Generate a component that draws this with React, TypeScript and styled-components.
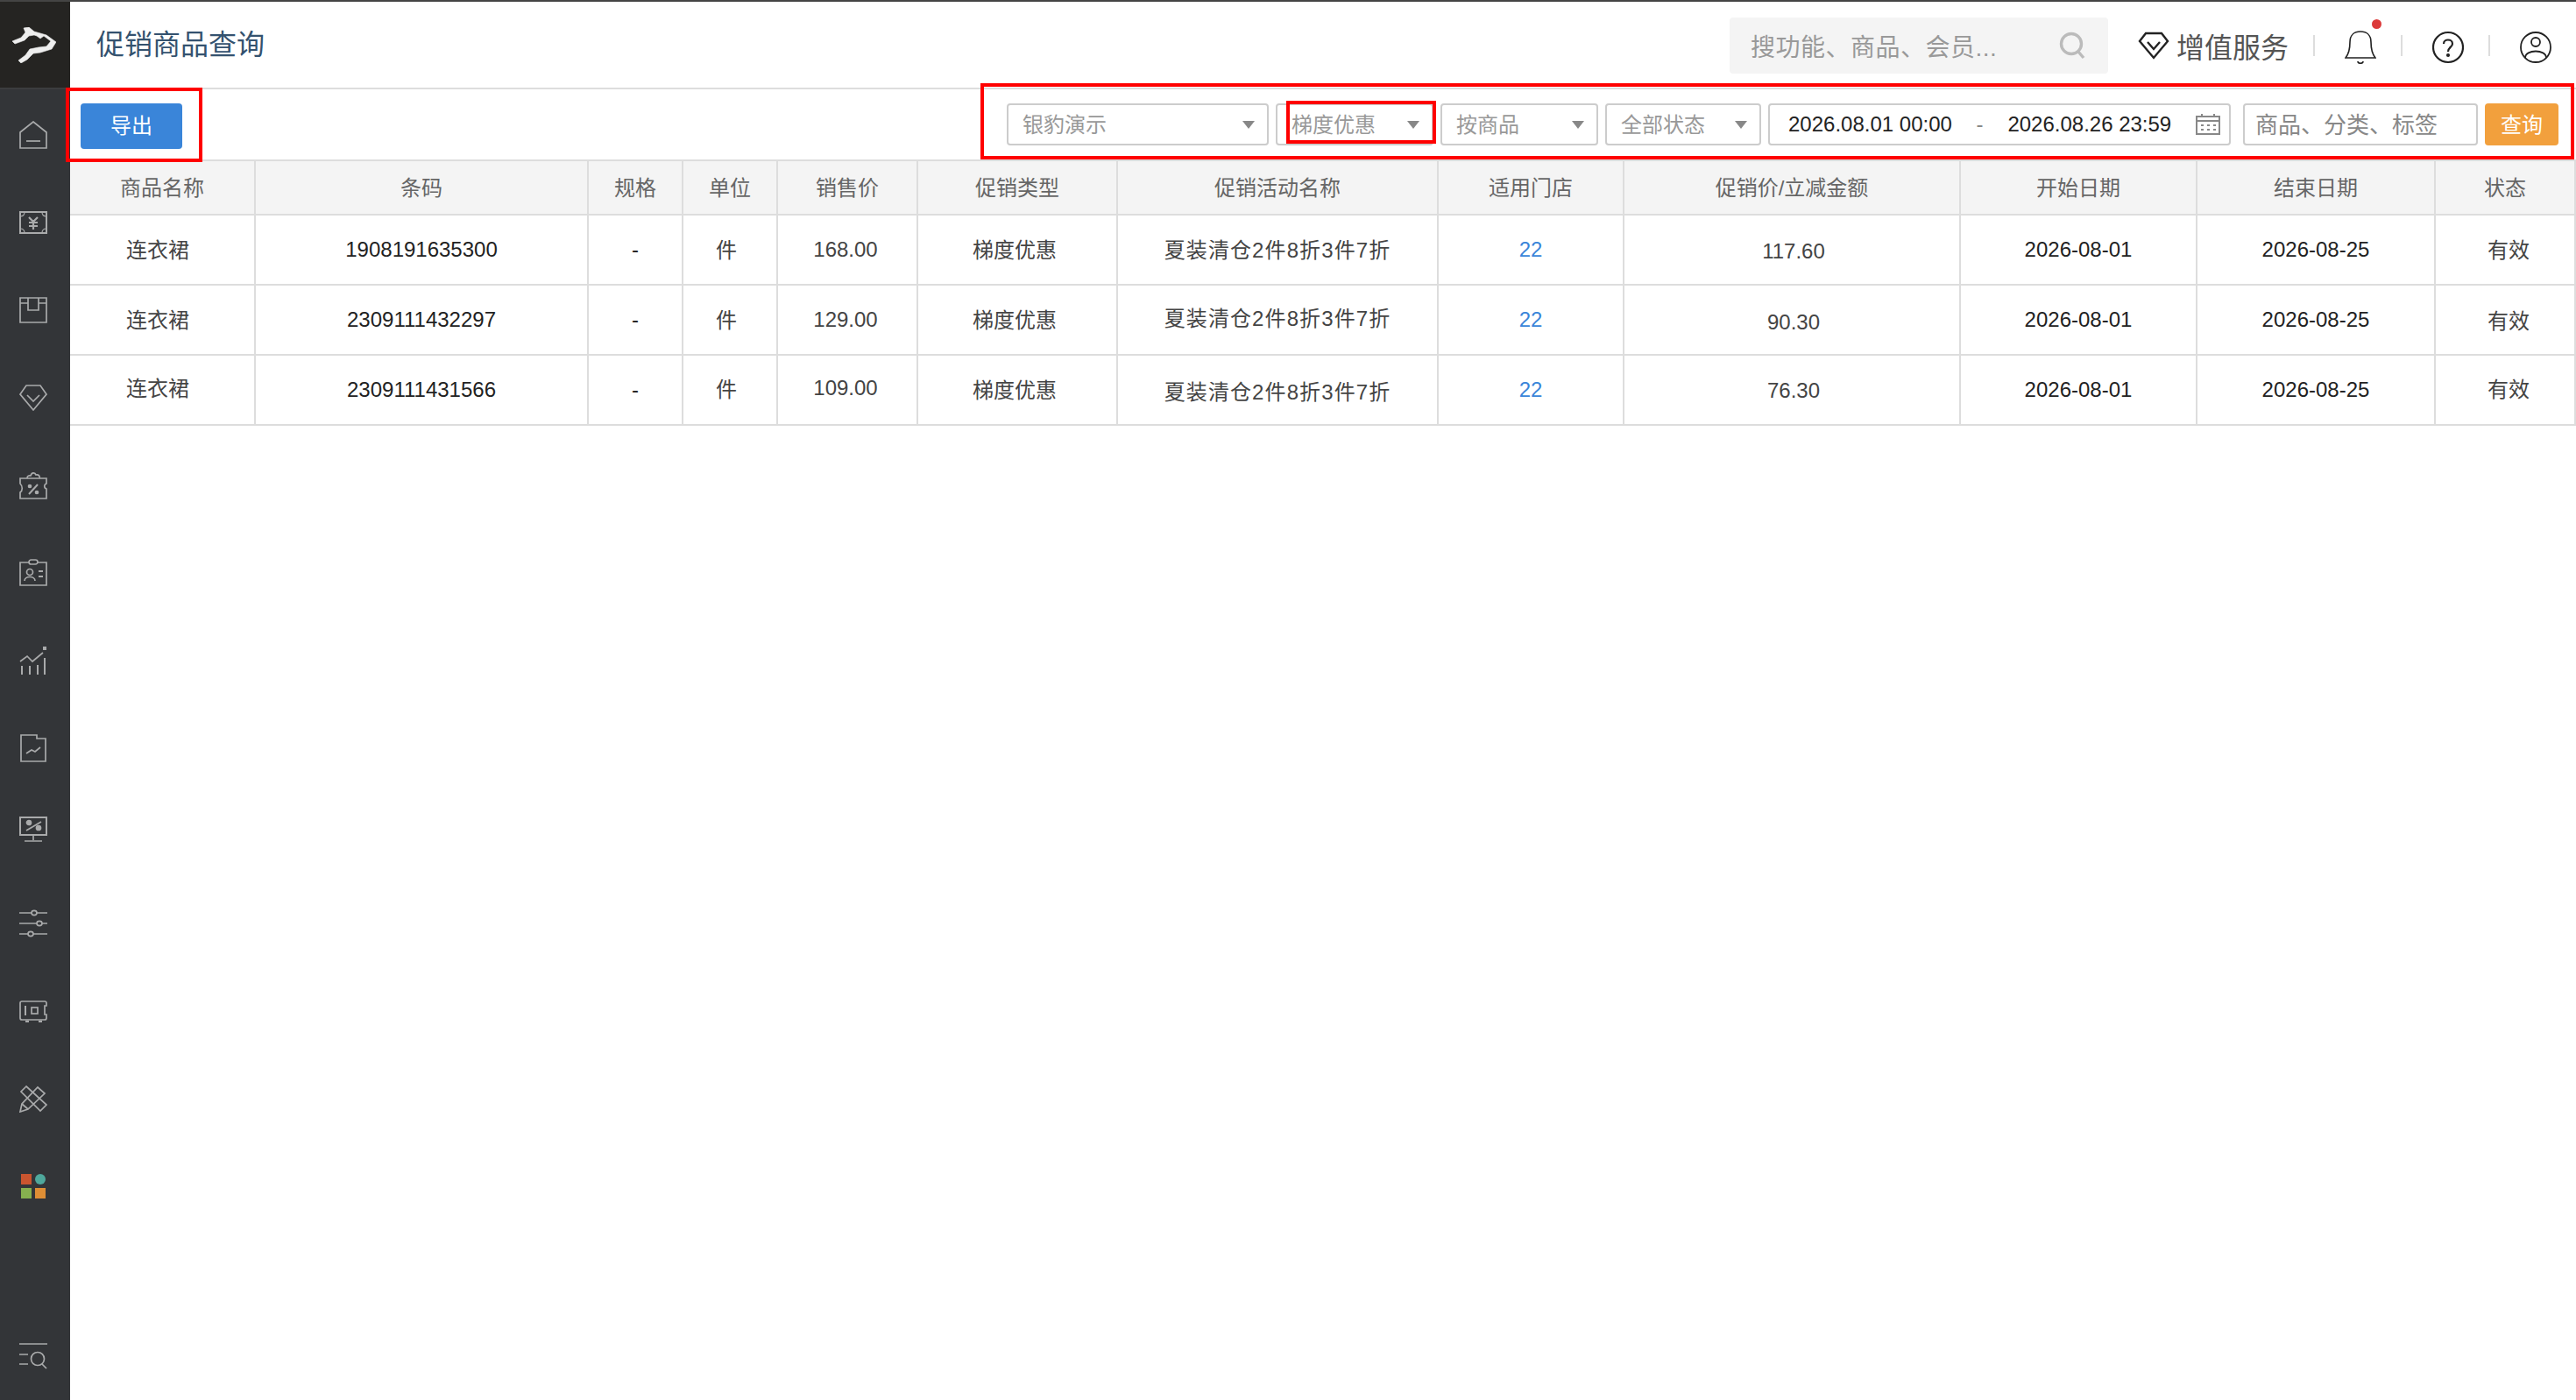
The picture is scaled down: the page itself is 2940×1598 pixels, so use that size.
import React from 'react';
import styled, {createGlobalStyle} from 'styled-components';

const FONT = `"Liberation Sans", "Noto Sans CJK SC", sans-serif`;

const GlobalStyle = createGlobalStyle`
    html, body {
        margin: 0;
        padding: 0;
        background: #fff;
        font-family: ${FONT};
    }
    * {
        box-sizing: border-box;
    }
`;

const Page = styled.div`
    position: relative;
    display: flex;
    width: 2940px;
    height: 1598px;
    overflow: hidden;
    border-top: 2px solid #444;
`;

const Sidebar = styled.aside`
    display: flex;
    flex-direction: column;
    flex: 0 0 80px;
    background: #333538;
`;

const LogoCell = styled.div`
    display: flex;
    align-items: center;
    padding-left: 14px;
    height: 100px;
    background: #252422;
    border-bottom: 2px solid #3c3d3f;
`;

const NavList = styled.nav`
    display: flex;
    flex-direction: column;
    flex: 1;
    padding-top: 2px;
`;

const NavItem = styled.div<{$last?: boolean}>`
    display: flex;
    align-items: center;
    justify-content: center;
    height: 100px;
    padding-right: 4px;
    margin-top: ${p => (p.$last ? 'auto' : '0')};
`;

const NavSvg = styled.svg.attrs({viewBox: '0 0 32 32', fill: 'none'})`
    width: 32px;
    height: 32px;
    stroke: #a9aaab;
    stroke-width: 1.7;
`;

const Main = styled.main`
    display: flex;
    flex-direction: column;
    flex: 1;
    min-width: 0;
`;

const TopBar = styled.header`
    display: flex;
    align-items: center;
    height: 100px;
    padding: 2px 28px 0 30px;
    border-bottom: 2px solid #ddd;
`;

const PageTitle = styled.h1`
    flex: 1;
    margin: 0;
    padding-bottom: 8px;
    font-size: 32px;
    font-weight: 400;
    color: #34526f;
`;

const SearchBox = styled.div`
    display: flex;
    align-items: center;
    justify-content: space-between;
    width: 432px;
    height: 64px;
    padding: 0 26px 0 24px;
    margin-right: 34px;
    background: #f4f4f4;
    border-radius: 4px;
    font-size: 28px;
    letter-spacing: 0.5px;
    color: #999;
`;

const ServiceLink = styled.div`
    display: flex;
    align-items: center;
    gap: 8px;
    font-size: 32px;
    color: #555;
`;

const Divider = styled.span`
    width: 2px;
    height: 24px;
    margin: 0 34px 0 28px;
    background: #ddd;
`;

const ToolIcon = styled.span`
    position: relative;
    display: flex;
    width: 36px;
    height: 38px;
    margin-top: 4px;
    align-items: center;
    justify-content: center;
`;

const RedDot = styled.i`
    position: absolute;
    top: -13px;
    right: -6px;
    width: 11px;
    height: 11px;
    border-radius: 50%;
    background: #dc3a3a;
`;

const Toolbar = styled.div`
    display: flex;
    align-items: center;
    justify-content: space-between;
    height: 80px;
    padding: 0 20px 0 12px;
`;

const ExportButton = styled.button`
    width: 116px;
    height: 52px;
    margin-top: 4px;
    padding: 0 0 5px;
    border: 0;
    border-radius: 4px;
    background: #3a85d9;
    color: #fff;
    font: 24px ${FONT};
`;

const Filters = styled.div`
    display: flex;
    align-items: center;
    gap: 8px;
`;

const Field = styled.div<{$width: number}>`
    display: flex;
    align-items: center;
    justify-content: space-between;
    width: ${p => p.$width}px;
    height: 48px;
    padding: 0 14px 3px 16px;
    border: 2px solid #ccc;
    border-radius: 4px;
    background: #fff;
    font-size: 24px;
    color: #999;
`;

const Caret = styled.i`
    width: 0;
    height: 0;
    margin-top: 4px;
    border-left: 7px solid transparent;
    border-right: 7px solid transparent;
    border-top: 9px solid #888;
`;

const DateField = styled(Field)`
    margin-right: 6px;
    padding: 0 10px 0 21px;
    color: #222;
`;

const DateDash = styled.span`
    color: #888;
`;

const KeywordField = styled(Field)`
    padding: 0 0 3px 12px;
    font-size: 26px;
    color: #888;
`;

const QueryButton = styled.button`
    width: 84px;
    height: 48px;
    padding: 0 0 3px;
    border: 0;
    border-radius: 4px;
    background: #f2a03d;
    color: #fff;
    font: 24px ${FONT};
`;

const Table = styled.table`
    width: 2860px;
    table-layout: fixed;
    border-collapse: separate;
    border-spacing: 0;
    font-size: 24px;
`;

const HeadCell = styled.th`
    height: 64px;
    padding: 0 0 4px;
    font-weight: 400;
    color: #666;
    background: #f4f4f4;
    border-top: 2px solid #ddd;
    border-bottom: 2px solid #ddd;
    border-right: 2px solid #ddd;
`;

const BodyCell = styled.td<{$tone: string; $dy: number; $dx: number; $track?: number}>`
    height: 80px;
    padding: ${p => Math.max(p.$dy, 0) * 2}px ${p => Math.max(-p.$dx, 0) * 2}px ${p => Math.max(-p.$dy, 0) * 2}px ${p => Math.max(p.$dx, 0) * 2}px;
    text-align: center;
    letter-spacing: ${p => p.$track ?? 0}px;
    color: ${p => p.$tone};
    border-bottom: 2px solid #ddd;
    border-right: 2px solid #ddd;
`;

const ExportFrame = styled.div`
    position: absolute;
    left: 75px;
    top: 98px;
    width: 156px;
    height: 85px;
    border: 4px solid #f00;
`;

const FilterFrame = styled.div`
    position: absolute;
    left: 1119px;
    top: 93px;
    width: 1819px;
    height: 87px;
    border: 4px solid #f00;
`;

const TypeFrame = styled.div`
    position: absolute;
    left: 1468px;
    top: 113px;
    width: 171px;
    height: 49px;
    border: 4px solid #f00;
`;

const DARK = '#222';
const MID = '#444';
const LINK = '#3a85d9';

interface Column {
    title: string;
    width: number;
    tone: string;
    dx?: number;
    dy?: number;
    track?: number;
}

const columns: Column[] = [
    {title: '商品名称', width: 212, tone: MID, dx: -5, dy: -2},
    {title: '条码', width: 380, tone: DARK},
    {title: '规格', width: 108, tone: DARK},
    {title: '单位', width: 108, tone: MID, dx: -4, dy: -2},
    {title: '销售价', width: 160, tone: MID, dx: -2},
    {title: '促销类型', width: 228, tone: MID, dx: -3, dy: -2},
    {title: '促销活动名称', width: 366, tone: MID, dy: -2, track: 1.1},
    {title: '适用门店', width: 212, tone: LINK},
    {title: '促销价/立减金额', width: 384, tone: MID, dx: 2},
    {title: '开始日期', width: 270, tone: DARK},
    {title: '结束日期', width: 272, tone: DARK},
    {title: '状态', width: 160, tone: MID, dx: 4, dy: -2}
];

const rows = [
    ['连衣裙', '1908191635300', '-', '件', '168.00', '梯度优惠', '夏装清仓2件8折3件7折', '22', '117.60', '2026-08-01', '2026-08-25', '有效'],
    ['连衣裙', '2309111432297', '-', '件', '129.00', '梯度优惠', '夏装清仓2件8折3件7折', '22', '90.30', '2026-08-01', '2026-08-25', '有效'],
    ['连衣裙', '2309111431566', '-', '件', '109.00', '梯度优惠', '夏装清仓2件8折3件7折', '22', '76.30', '2026-08-01', '2026-08-25', '有效']
];

// text in the original sits a pixel or two off centre in some cells
const rowNudges: Record<number, number>[] = [
    {8: 2},
    {6: -2, 8: 3, 11: 1},
    {0: -2, 3: -1, 4: -2, 6: 2, 8: 1, 11: -1}
];

const Logo = () => (
    <svg width="50" height="41" viewBox="0 0 50 41" fill="#eee" stroke="#eee" strokeWidth="0.6" strokeLinejoin="round">
        <path d="M0 16 L10 12 L15 6 L13 1 L19 0 L25 5 L39 9 L50 17 L45 25 L32 29 L24 30 L17 37 L10 41 L7 38 L15 32 L20 25 L30 23 L39 22 L44 16 L36 10 L32 13 L28 10 L25 9 L19 10 L14 15 L3 19Z"/>
    </svg>
);

const navIcons = [
    <NavSvg key="home">
        <path d="M1 13 L16 1 L31 13 V31 H1Z"/>
        <path d="M8 23 H24"/>
    </NavSvg>,
    <NavSvg key="money">
        <path d="M1 4 H31 V28 H1Z" strokeWidth="2"/>
        <path d="M6 4 C6 7 4 9 1 9 M26 4 C26 7 28 9 31 9 M6 28 C6 25 4 23 1 23 M26 28 C26 25 28 23 31 23" strokeWidth="1.2"/>
        <path d="M11 10 L16 15 L21 10 M11 16 H21 M11 20 H21 M16 15 V24" strokeWidth="2.2"/>
    </NavSvg>,
    <NavSvg key="box">
        <path d="M1 2 H31 V30 H1Z"/>
        <path d="M1 8 H10 V16 H22 V8 H31 M10 2 V8 M22 2 V8"/>
    </NavSvg>,
    <NavSvg key="diamond">
        <path d="M8 2 H24 L31 12 L16 30 L1 12Z"/>
        <path d="M9 13 L16 20 L23 13"/>
    </NavSvg>,
    <NavSvg key="coupon">
        <path d="M1 8 H31 V14 C28 15 28 19 31 20 V31 H1 V24 C4 22 4 17 1 14Z"/>
        <path d="M9 8 C9 4 12 5 13 5 C14 1 18 1 19 4 C22 3 24 6 23 8"/>
        <path d="M11 26 L21 15" strokeWidth="2"/>
        <circle cx="12" cy="17" r="1.5" fill="#a9aaab"/>
        <circle cx="20" cy="24" r="1.5" fill="#a9aaab"/>
    </NavSvg>,
    <NavSvg key="card">
        <path d="M1 4 H31 V30 H1Z"/>
        <rect x="11" y="1" width="10" height="5" rx="2.5" fill="#333538"/>
        <circle cx="12" cy="15" r="3.5"/>
        <path d="M6 25 C6 19 18 19 18 25"/>
        <path d="M22 14 H27 M22 20 H27" strokeWidth="2"/>
    </NavSvg>,
    <NavSvg key="chart">
        <path d="M1 17 L9 11 L15 17 L27 7"/>
        <path d="M3 22 V32 M12 22 V32 M21 21 V32 M29 13 V32" strokeWidth="2"/>
        <rect x="27" y="0" width="4" height="4" fill="#a9aaab" stroke="none"/>
    </NavSvg>,
    <NavSvg key="report">
        <path d="M2 1 H20 V5 H30 V31 H2Z"/>
        <path d="M8 22 L14 18 L18 20 L24 15"/>
    </NavSvg>,
    <NavSvg key="monitor" style={{marginTop: -14}}>
        <path d="M1 2 H31 V22 H1Z" strokeWidth="2"/>
        <path d="M16 22 V28 M6 29 H26"/>
        <circle cx="11" cy="8" r="2.5" fill="#a9aaab"/>
        <circle cx="22" cy="14" r="2.5" fill="#a9aaab"/>
        <path d="M8 17 L25 7"/>
    </NavSvg>,
    <NavSvg key="sliders">
        <path d="M0 4 H32 M0 16 H32 M0 28 H32"/>
        <ellipse cx="17" cy="4" rx="3" ry="2.6" fill="#333538"/>
        <ellipse cx="23" cy="16" rx="3" ry="2.6" fill="#333538"/>
        <ellipse cx="13" cy="28" rx="3" ry="2.6" fill="#333538"/>
    </NavSvg>,
    <NavSvg key="safe">
        <path d="M3 5 H29 C30 5 31 6 31 7 V10 H29 V20 H31 V24 C31 26 30 26 29 26 H3 C2 26 1 26 1 24 V7 C1 6 2 5 3 5Z"/>
        <path d="M7 28 H11 M22 28 H26" strokeWidth="2"/>
        <path d="M7 10 V21" strokeWidth="2"/>
        <rect x="14" y="12" width="7" height="7"/>
    </NavSvg>,
    <NavSvg key="tools">
        <path d="M1 31 L3 22 L21 3 L29 10 L10 28Z"/>
        <path d="M8 2 L2 8 L24 30 L31 23Z"/>
        <path d="M3 22 L10 28"/>
    </NavSvg>,
    <NavSvg key="apps" style={{stroke: 'none'}}>
        <rect x="2" y="2" width="12" height="12" fill="#c9552f"/>
        <ellipse cx="24" cy="8" rx="6" ry="6" fill="#4fa89c"/>
        <rect x="2" y="18" width="12" height="12" fill="#86b04f"/>
        <rect x="18" y="18" width="12" height="12" fill="#de8e35"/>
    </NavSvg>
];

const SearchGlyph = () => (
    <svg width="30" height="32" viewBox="0 0 30 32" fill="none" stroke="#bbb" strokeWidth="3.4">
        <circle cx="14" cy="14" r="11.5"/>
        <path d="M22 23 L28 30"/>
    </svg>
);

const DiamondGlyph = () => (
    <svg width="36" height="32" viewBox="0 0 36 32" fill="none" stroke="#222" strokeWidth="2.4">
        <path d="M9 2 H27 L34 11 L18 30 L2 11Z"/>
        <path d="M11 12 L18 20 L25 12"/>
    </svg>
);

const BellGlyph = () => (
    <svg width="36" height="38" viewBox="0 0 36 38" fill="none" stroke="#222" strokeWidth="1.6">
        <path d="M1 31 C6 25 6 18 6 13 C6 5 11 1 18 1 C25 1 30 5 30 13 C30 18 30 25 35 31Z"/>
        <path d="M15 35 C15 38 21 38 21 35"/>
    </svg>
);

const HelpGlyph = () => (
    <svg width="36" height="38" viewBox="0 0 36 38" fill="none" stroke="#222" strokeWidth="2.2">
        <ellipse cx="18" cy="19" rx="17" ry="17"/>
        <path d="M13 15 C13 9 23 9 23 15 C23 19 18 19 18 24"/>
        <circle cx="18" cy="28" r="1" fill="#222"/>
    </svg>
);

const UserGlyph = () => (
    <svg width="36" height="38" viewBox="0 0 36 38" fill="none" stroke="#222" strokeWidth="1.8">
        <ellipse cx="18" cy="19" rx="17" ry="17"/>
        <circle cx="18" cy="13" r="5"/>
        <path d="M6 31 C6 21 30 21 30 31"/>
    </svg>
);

const CalendarGlyph = () => (
    <svg width="28" height="24" viewBox="0 0 28 24" fill="none" stroke="#888" strokeWidth="2">
        <path d="M1 3 H27 V23 H1Z"/>
        <path d="M1 8 H27 M7 0 V4 M21 0 V4"/>
        <path d="M6 13 H9 M13 13 H16 M20 13 H23 M6 18 H9 M13 18 H16 M20 18 H23"/>
    </svg>
);

const filters = [
    {label: '银豹演示', width: 299},
    {label: '梯度优惠', width: 180},
    {label: '按商品', width: 180},
    {label: '全部状态', width: 178}
];

export default function App() {
    return <>
        <GlobalStyle/>
        <Page>
            <Sidebar>
                <LogoCell><Logo/></LogoCell>
                <NavList>
                    {navIcons.map((icon, i) => <NavItem key={i}>{icon}</NavItem>)}
                    <NavItem $last>
                        <NavSvg>
                            <path d="M0 2 H32 M0 14 H10 M0 25 H10"/>
                            <circle cx="21" cy="19" r="7.5"/>
                            <path d="M26 25 L31 30"/>
                        </NavSvg>
                    </NavItem>
                </NavList>
            </Sidebar>
            <Main>
                <TopBar>
                    <PageTitle>促销商品查询</PageTitle>
                    <SearchBox>
                        <span>搜功能、商品、会员...</span>
                        <SearchGlyph/>
                    </SearchBox>
                    <ServiceLink><DiamondGlyph/>增值服务</ServiceLink>
                    <Divider/>
                    <ToolIcon><BellGlyph/><RedDot/></ToolIcon>
                    <Divider/>
                    <ToolIcon><HelpGlyph/></ToolIcon>
                    <Divider/>
                    <ToolIcon><UserGlyph/></ToolIcon>
                </TopBar>
                <Toolbar>
                    <ExportButton>导出</ExportButton>
                    <Filters>
                        {filters.map(f => <Field key={f.label} $width={f.width}>{f.label}<Caret/></Field>)}
                        <DateField $width={528}>
                            <span>2026.08.01 00:00</span>
                            <DateDash>-</DateDash>
                            <span>2026.08.26 23:59</span>
                            <CalendarGlyph/>
                        </DateField>
                        <KeywordField $width={268}>商品、分类、标签</KeywordField>
                        <QueryButton>查询</QueryButton>
                    </Filters>
                </Toolbar>
                <Table>
                    <colgroup>
                        {columns.map(c => <col key={c.title} width={c.width}/>)}
                    </colgroup>
                    <thead>
                        <tr>{columns.map(c => <HeadCell key={c.title}>{c.title}</HeadCell>)}</tr>
                    </thead>
                    <tbody>
                        {rows.map((row, r) => <tr key={r}>
                            {row.map((text, c) => (
                                <BodyCell
                                    key={c}
                                    $tone={columns[c].tone}
                                    $dx={columns[c].dx ?? 0}
                                    $dy={(columns[c].dy ?? 0) + (rowNudges[r][c] ?? 0)}
                                    $track={columns[c].track}
                                >
                                    {text}
                                </BodyCell>
                            ))}
                        </tr>)}
                    </tbody>
                </Table>
            </Main>
            <ExportFrame/>
            <FilterFrame/>
            <TypeFrame/>
        </Page>
    </>;
}
